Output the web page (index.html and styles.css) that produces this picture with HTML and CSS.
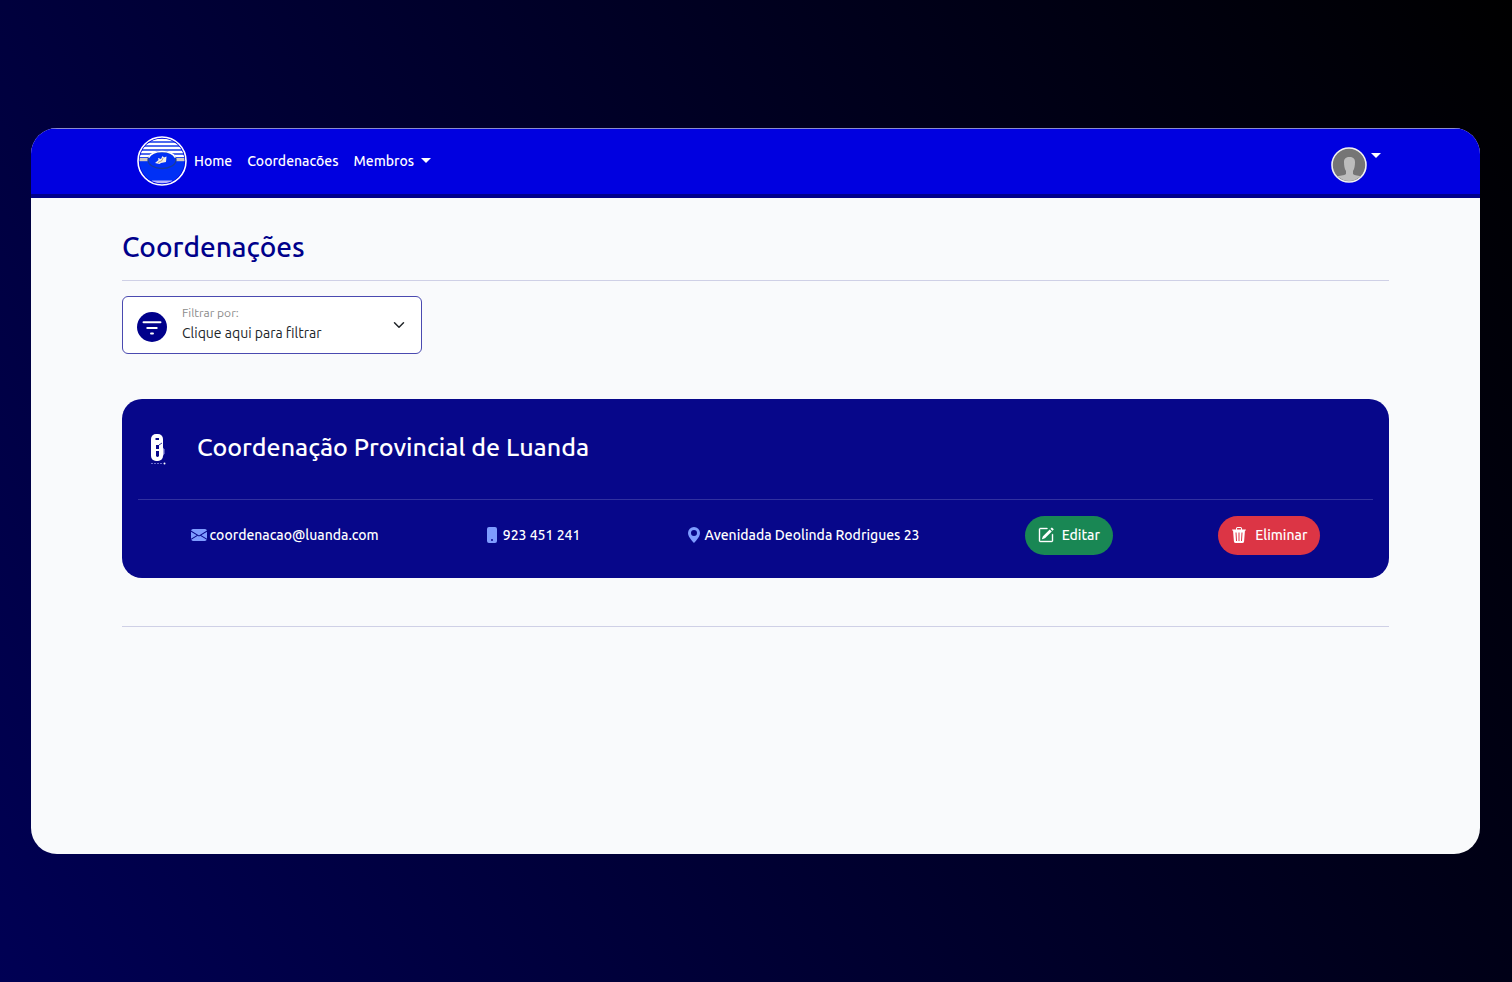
FILE: index.html
```html
<!DOCTYPE html>
<html lang="pt">
<head>
    <meta charset="UTF-8">
    <meta name="viewport" content="width=device-width, initial-scale=1.0">
    <title>Coordenações</title>
    <link rel="stylesheet" href="styles.css">
</head>
<body>
    <div class="window">
        <header class="navbar">
            <nav class="menu">
                <a class="logo" href="#" aria-label="Início">
                    <svg width="50" height="50" viewBox="0 0 50 50">
                        <defs>
                            <clipPath id="logo-clip"><circle cx="25" cy="25" r="22.500"/></clipPath>
                        </defs>
                        <circle cx="25" cy="25" r="24" fill="#0000e0" stroke="#fff" stroke-width="1.600"/>
                        <g clip-path="url(#logo-clip)">
                            <rect width="50" height="22" fill="#1238e8"/>
                            <path d="M0 4h50M0 8h50M0 12h50M0 16h50M0 20h50" stroke="#fff" stroke-width="2.400"/>
                            <rect y="21.500" width="50" height="29" fill="#0030f5"/>
                            <rect y="22" width="50" height="3.200" fill="#cfc8c0"/>
                            <path d="M15 46h20" stroke="#b8b4ff" stroke-width="3"/>
                            <ellipse cx="25" cy="24" rx="14" ry="8.500" fill="#0030f5" stroke="#173a9c" stroke-width="1.300"/>
                            <path d="M11.500 21.500Q15 15.500 25 15.500T38.500 21.500" fill="none" stroke="#fff" stroke-width="1.600"/>
                        </g>
                        <path d="M18 27l3.500-3-.5-2 3 1 1.500-3 1.500 1.500 2.500-1-.5 5.500-5 1-1.500 1z" fill="#f4efe6"/>
                        <path d="M21 26.500l4-2 1-2.500" fill="none" stroke="#8a7a66" stroke-width=".7"/>
                    </svg>
                </a>
                <a class="link" href="#">Home</a>
                <a class="link" href="#">Coordenacões</a>
                <a class="link" href="#">Membros <span class="caret"></span></a>
            </nav>
            <button class="user" type="button" aria-label="Conta">
                <svg width="36" height="36" viewBox="0 0 36 36">
                    <defs>
                        <clipPath id="user-clip"><circle cx="18" cy="18" r="16"/></clipPath>
                    </defs>
                    <circle cx="18" cy="18" r="17" fill="#757575" stroke="#f1f1f1" stroke-width="1.600"/>
                    <path clip-path="url(#user-clip)" d="M18.500 10c3.500 0 5.500 1.500 5.500 5 0 3.500-.5 7-2 9v3c1.500 1.500 6 1.500 9 3v6H5v-6c3-1.500 8.500-1.500 10-3v-3c-1.500-2-2-5.500-2-9 0-3.500 2-5 5.500-5z" fill="#bdbdbd"/>
                </svg>
                <span class="caret"></span>
            </button>
        </header>

        <main class="content">
            <h1 class="title">Coordenações</h1>
            <hr class="line">

            <div class="filter">
                <svg class="filter-icon" width="30" height="30" viewBox="0 0 16 16" fill="#00008b">
                    <circle cx="8" cy="8" r="8"/>
                    <path d="M3.500 5.500h9M5.500 8.500h5M7.500 11.500h1" stroke="#fff" stroke-width="1.100" stroke-linecap="round"/>
                </svg>
                <div class="filter-field">
                    <label for="filtro">Filtrar por:</label>
                    <select id="filtro">
                        <option>Clique aqui para filtrar</option>
                    </select>
                </div>
                <svg class="filter-arrow" width="12" height="12" viewBox="0 0 16 16" fill="none" stroke="#212529" stroke-width="2" stroke-linecap="round" stroke-linejoin="round">
                    <path d="m2 5 6 6 6-6"/>
                </svg>
            </div>

            <section class="card">
                <div class="card-header">
                    <svg width="20" height="32" viewBox="0 0 20 32">
                        <rect x="3" y="1" width="12" height="27" rx="5" fill="#fff"/>
                        <path d="M7.500 6h3.500" stroke="#07078a" stroke-width="2"/>
                        <path d="M8 12h3v4H8zM8 18h3v5q-1.500 2-3 0z" fill="#07078a"/>
                        <path d="M11 12l3-2" stroke="#07078a" stroke-width=".8"/>
                        <path d="M15 14.500l1.500 2v4L15 23z" fill="#9a9ae0"/>
                        <path d="M3 30.500h12" stroke="#6a6acb" stroke-width="1" stroke-dasharray="2 1"/>
                        <circle cx="16.500" cy="30.500" r="1" fill="#fff"/>
                    </svg>
                    <h2>Coordenação Provincial de Luanda</h2>
                </div>
                <div class="card-body">
                    <span class="info">
                        <svg width="16" height="16" viewBox="0 0 16 16" fill="#7e9cff">
                            <path d="M.05 3.555A2 2 0 0 1 2 2h12a2 2 0 0 1 1.950 1.555L8 8.414zM0 4.697v7.104l5.803-3.558zM6.761 8.830l-6.570 4.027A2 2 0 0 0 2 14h12a2 2 0 0 0 1.808-1.144l-6.570-4.027L8 9.586zm3.436-.586L16 11.801V4.697z"/>
                        </svg>
                        coordenacao@luanda.com
                    </span>
                    <span class="info">
                        <svg width="16" height="16" viewBox="0 0 16 16" fill="#7e9cff">
                            <path d="M3 2a2 2 0 0 1 2-2h6a2 2 0 0 1 2 2v12a2 2 0 0 1-2 2H5a2 2 0 0 1-2-2zm6 11a1 1 0 1 0-2 0 1 1 0 0 0 2 0"/>
                        </svg>
                        923 451 241
                    </span>
                    <span class="info">
                        <svg width="16" height="16" viewBox="0 0 16 16" fill="#7e9cff">
                            <path d="M8 16s6-5.686 6-10A6 6 0 0 0 2 6c0 4.314 6 10 6 10m0-7a3 3 0 1 1 0-6 3 3 0 0 1 0 6"/>
                        </svg>
                        Avenidada Deolinda Rodrigues 23
                    </span>
                    <button class="btn edit" type="button">
                        <svg width="16" height="16" viewBox="0 0 16 16" fill="currentColor">
                            <path d="M15.502 1.940a.5.5 0 0 1 0 .706L14.459 3.690l-2-2L13.502.646a.5.5 0 0 1 .707 0l1.293 1.293zm-1.750 2.456-2-2L4.939 9.210a.5.5 0 0 0-.121.196l-.805 2.414a.25.25 0 0 0 .316.316l2.414-.805a.5.5 0 0 0 .196-.12z"/>
                            <path fill-rule="evenodd" d="M1 13.500A1.500 1.500 0 0 0 2.500 15h11a1.500 1.500 0 0 0 1.500-1.500v-6a.5.5 0 0 0-1 0v6a.5.5 0 0 1-.5.5h-11a.5.5 0 0 1-.5-.5v-11a.5.5 0 0 1 .5-.5H9a.5.5 0 0 0 0-1H2.500A1.500 1.500 0 0 0 1 2.500z" stroke="currentColor" stroke-width=".4"/>
                        </svg>
                        Editar
                    </button>
                    <button class="btn delete" type="button">
                        <svg width="16" height="16" viewBox="0 0 16 16" fill="currentColor">
                            <path fill-rule="evenodd" d="M6.500 0A1.500 1.500 0 0 0 5 1.500v1H1.500a.5.5 0 0 0 0 1h.54l.85 10.660A2 2 0 0 0 4.885 16h6.230a2 2 0 0 0 1.994-1.840l.853-10.660h.538a.5.5 0 0 0 0-1H11v-1A1.500 1.500 0 0 0 9.500 0zM6 1.500a.5.5 0 0 1 .5-.5h3a.5.5 0 0 1 .5.5v1H6zM4.500 5.530l.5 8.500 1-.06-.5-8.500zM7.500 5.500v8.500h1V5.500zM10.500 5.470l-.5 8.500 1 .06.500-8.500z"/>
                        </svg>
                        Eliminar
                    </button>
                </div>
            </section>
            <hr class="line">
        </main>
    </div>
</body>
</html>
```
FILE: styles.css
```css
* {
    box-sizing: border-box;
}
body {
    margin: 0;
    min-height: 100vh;
    display: flex;
    align-items: center;
    padding: 0 32px 0 31px;
    background: linear-gradient(60deg, #000054, #000000);
    font-family: Ubuntu, "Noto Sans", sans-serif;
    font-size: 14px;
    font-weight: 500;
    line-height: 24px;
}
svg {
    display: block;
    flex-shrink: 0;
}
.window {
    flex: 1;
    min-height: 74vh;
    background: #f9fafc;
    border-radius: 26px;
    overflow: hidden;
}
.navbar {
    display: flex;
    align-items: center;
    justify-content: space-between;
    height: 70px;
    padding: 0 99px 0 106px;
    background: #0000e0;
    border-top: 1px solid #8a8ad0;
    border-bottom: 4px solid #00008b;
}
.menu {
    display: flex;
    align-items: center;
    gap: 15px;
}
.logo {
    margin-right: -8px;
}
.link {
    color: #fff;
    text-decoration: none;
}
.caret {
    display: inline-block;
    margin-left: 4px;
    vertical-align: 3px;
    border-top: 5px solid #fff;
    border-left: 5px solid transparent;
    border-right: 5px solid transparent;
}
.user {
    display: flex;
    padding: 8px 0 0;
    border: 0;
    background: none;
    cursor: pointer;
}
.user .caret {
    margin-top: 6px;
}
.content {
    padding: 32px 91px;
}
.title {
    margin: 0;
    color: #00008b;
    font-size: 28px;
    font-weight: 500;
    line-height: 34px;
}
.line {
    margin: 16px 0 15px;
    border: 0;
    border-top: 1px solid #cfd0e6;
}
.filter {
    display: flex;
    align-items: center;
    width: 300px;
    height: 58px;
    padding: 0 16px 0 14px;
    background: #fff;
    border: 1px solid #4a4ab0;
    border-radius: 6px;
}
.filter-icon {
    margin: 4px 15px 0 0;
}
.filter-field {
    flex: 1;
    display: flex;
    flex-direction: column;
}
.filter-field label {
    color: #8b8b8b;
    font-size: 12px;
    font-weight: 400;
    line-height: 16px;
}
.filter-field select {
    appearance: none;
    padding: 0;
    border: 0;
    background: none;
    color: #212529;
    font: inherit;
    font-weight: 400;
}
.card {
    margin: 45px 0 48px;
    padding: 0 16px 23px;
    background: #07078a;
    border-radius: 20px;
    color: #fff;
}
.card-header {
    display: flex;
    align-items: center;
    gap: 29px;
    height: 101px;
    padding: 0 10px;
    border-bottom: 1px solid #3030a0;
}
.card-header h2 {
    margin: 0;
    padding-bottom: 4px;
    font-size: 25px;
    font-weight: 500;
    line-height: 32px;
}
.card-body {
    display: flex;
    align-items: center;
    justify-content: space-around;
    padding-top: 16px;
}
.info {
    display: flex;
    align-items: center;
    gap: 3px;
}
.btn {
    display: flex;
    align-items: center;
    gap: 8px;
    height: 39px;
    padding: 0 13px;
    border: 0;
    border-radius: 20px;
    color: #fff;
    font: inherit;
    cursor: pointer;
}
.edit {
    background: #198754;
}
.delete {
    background: #dc3545;
}
```
